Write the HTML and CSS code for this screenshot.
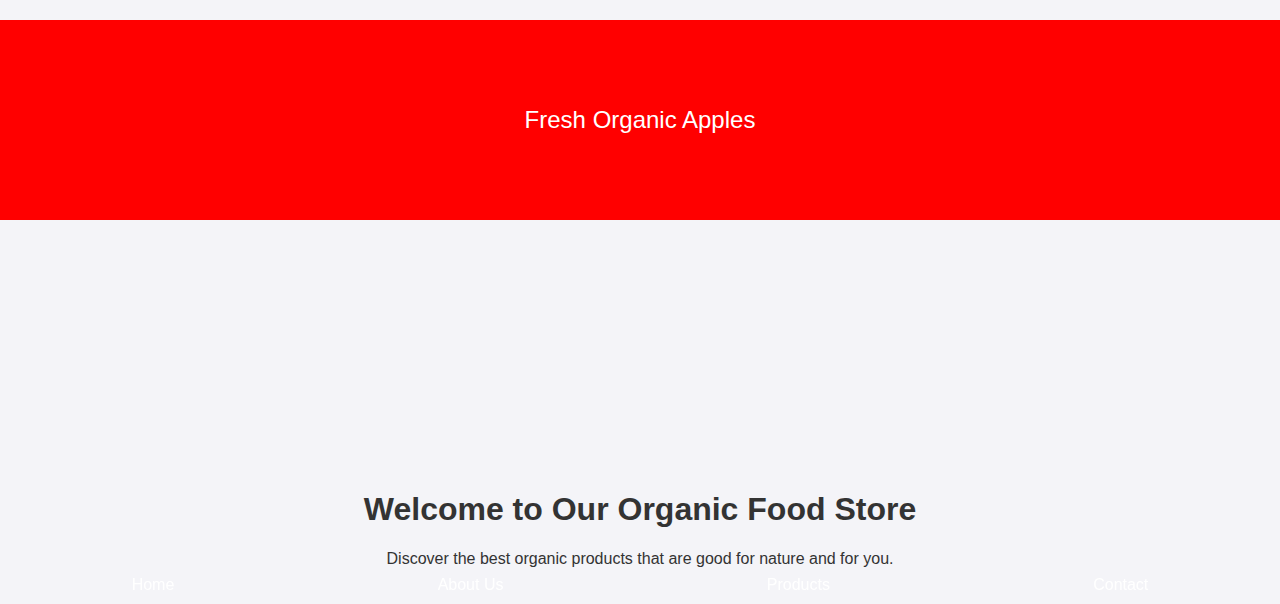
FILE: index.html
```html
<!DOCTYPE html>
<html lang="en">
<head>
<meta charset="utf-8">
<title>Organic Food Store</title>
<link rel="stylesheet" href="styles.css">
</head>
<body>
  <header class="banner">
    <div class="banner-text">Fresh Organic Apples</div>
  </header>
  <main class="intro">
    <h1 class="intro-title">Welcome to Our Organic Food Store</h1>
    <p class="intro-text">Discover the best organic products that are good for nature and for you.</p>
  </main>
  <nav class="bottom-nav">
    <a class="nav-link" href="#">Home</a>
    <a class="nav-link" href="#">About Us</a>
    <a class="nav-link" href="#">Products</a>
    <a class="nav-link" href="#">Contact</a>
  </nav>
</body>
</html>
```

FILE: styles.css
```css
html, body {
  margin: 0;
  padding: 0;
}
body {
  background: #f4f4f8;
  font-family: "Liberation Sans", Arial, sans-serif;
  color: #333;
}
.banner {
  margin-top: 20px;
  height: 200px;
  background: #ff0000;
  display: flex;
  align-items: center;
  justify-content: center;
}
.banner-text {
  color: #fff;
  font-size: 24px;
}
.intro {
  text-align: center;
}
.intro-title {
  margin: 271px 0 21.5px;
  font-size: 32px;
  font-weight: bold;
}
.intro-text {
  margin: 0;
  font-size: 16px;
}
.bottom-nav {
  position: fixed;
  left: 0;
  right: 0;
  bottom: 0;
  padding: 10px 0;
  display: flex;
  justify-content: space-around;
}
.nav-link {
  color: #fff;
  text-decoration: none;
  font-size: 16px;
}
```
